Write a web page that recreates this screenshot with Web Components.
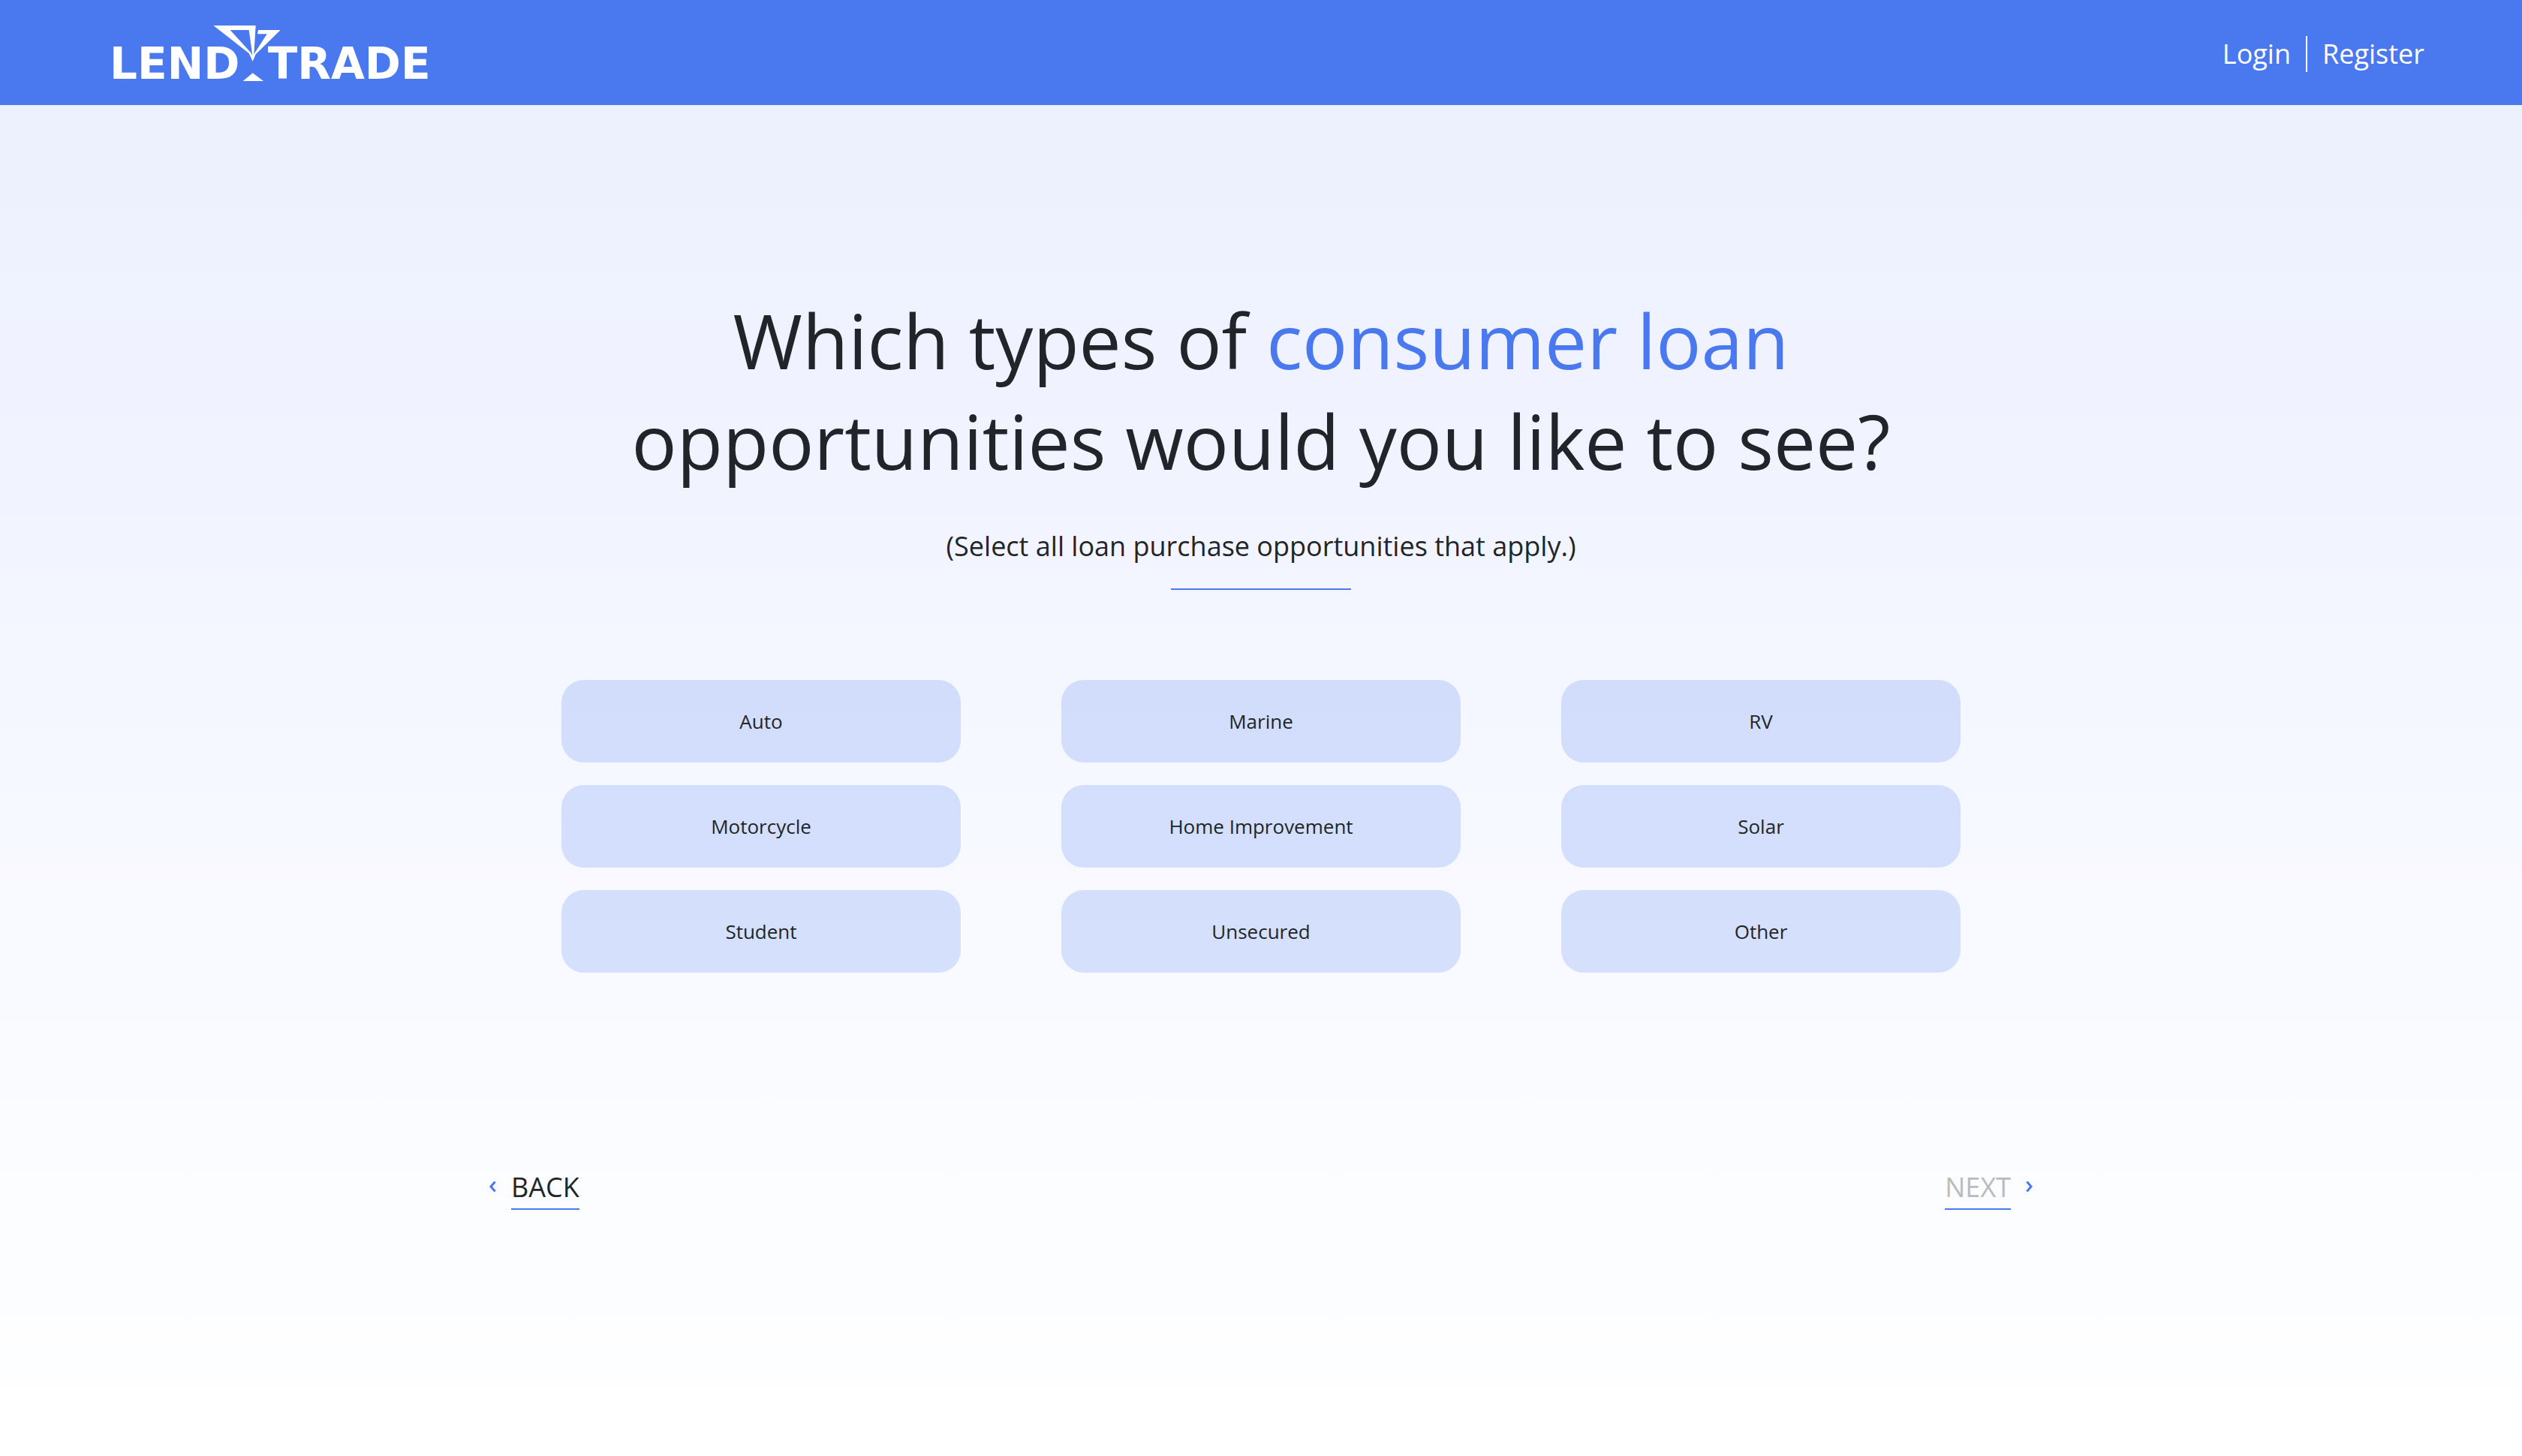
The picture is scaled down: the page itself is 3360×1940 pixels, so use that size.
<!DOCTYPE html>
<html lang="en">
<head>
<meta charset="utf-8">
<title>LendTrade</title>
<style>
  html { height: 100%; }
  body {
    margin: 0;
    min-height: 100%;
    font-family: "Open Sans", "Noto Sans", sans-serif;
    font-size: 36px;
    line-height: 48px;
    color: #212529;
    --brand: #4a78ef;
    --tile: rgba(74, 120, 239, .2);
    background: linear-gradient(180deg, #ebf0fd 0%, #f0f3ff 28%, #f5f8ff 52%, #fbfcff 80%, #fff 100%);
  }
</style>
</head>
<body>
<lt-app></lt-app>
<script>
  const define = (name, html, setup) => {
    const template = document.createElement('template');
    template.innerHTML = html;
    customElements.define(name, class extends HTMLElement {
      constructor() {
        super();
        this.attachShadow({ mode: 'open' }).append(template.content.cloneNode(true));
      }
      connectedCallback() { if (setup) setup(this, this.shadowRoot); }
    });
  };

  define('lt-logo', `
    <style>
      :host { display: block; }
      a { display: block; color: #fff; }
      svg { display: block; width: 458px; height: 80px; fill: currentColor; overflow: visible; }
      text { font: bold 174px "DejaVu Sans", sans-serif; }
    </style>
    <a href="#" aria-label="LendTrade home">
      <svg viewBox="60 60 1374 240">
        <path fill-rule="evenodd" d="M523 72H692L685 188L680 215L665 183ZM590 90L672 180L679 192L665 90Z"/>
        <path d="M702 90H791L692 187L680 215L676 200L685 187L737 106H699Z"/>
        <path d="M641 294L680 262L723 294Z"/>
        <text x="628" y="285" text-anchor="end">LEND</text>
        <text x="740" y="285">TRADE</text>
      </svg>
    </a>`);

  define('lt-header', `
    <style>
      :host {
        display: flex; justify-content: space-between; align-items: center;
        height: 140px; box-sizing: border-box; padding: 0 130px;
        background: var(--brand); color: #fff;
      }
      nav { display: flex; align-items: center; padding-top: 4px; }
      a { color: inherit; text-decoration: none; }
      a + a { margin-left: 20px; padding-left: 20px; border-left: 2px solid #fff; }
    </style>
    <lt-logo></lt-logo>
    <nav><a href="#login">Login</a><a href="#register">Register</a></nav>`);

  define('lt-title', `
    <style>
      :host { display: flex; flex-direction: column; align-items: center; text-align: center; }
      h1 { margin: 0; max-width: 1800px; font-size: 100px; line-height: 134px; font-weight: 400; text-wrap: balance; }
      p { margin: 50px 0 0; }
      hr { width: 240px; height: 2px; margin: 32px 0 0; border: 0; background: var(--brand); }
    </style>
    <h1><slot></slot></h1>
    <p><slot name="hint"></slot></p>
    <hr>`);

  define('lt-option', `
    <style>
      :host { display: block; }
      button {
        display: block; width: 100%; height: 110px; padding: 0; border: 0; border-radius: 30px;
        background: var(--tile); color: inherit; font: inherit; font-size: 26px; cursor: pointer;
      }
      button[aria-pressed="true"] { background: var(--brand); color: #fff; }
    </style>
    <button type="button" aria-pressed="false"><slot></slot></button>`,
    (host, root) => {
      const button = root.querySelector('button');
      button.onclick = () => button.setAttribute('aria-pressed', button.getAttribute('aria-pressed') !== 'true');
    });

  define('lt-options', `
    <style>
      :host {
        display: grid; grid-template-columns: repeat(3, 1fr); gap: 30px 134px;
        width: 100%; max-width: 1864px; margin: 0 auto;
      }
    </style>
    <slot></slot>`);

  define('lt-step', `
    <style>
      :host { display: block; }
      button {
        display: flex; align-items: center; gap: 20px; padding: 0; border: 0;
        background: none; color: inherit; font: inherit; cursor: pointer;
      }
      :host([forward]) button { flex-direction: row-reverse; }
      :host([forward]) svg { transform: scaleX(-1); }
      span { padding-bottom: 4px; border-bottom: 2px solid var(--brand); }
      button:disabled { color: #bbb; cursor: default; }
      svg { width: 9px; height: 14px; margin-bottom: 8px; fill: none; stroke: var(--brand); stroke-width: 3; }
    </style>
    <button type="button">
      <svg viewBox="0 0 9 14" aria-hidden="true"><path d="M7.6 .5L2 7L7.6 13.5"/></svg>
      <span><slot></slot></span>
    </button>`,
    (host, root) => { root.querySelector('button').disabled = host.hasAttribute('disabled'); });

  define('lt-app', `
    <style>
      :host { display: block; }
      main { display: flex; flex-direction: column; padding: 246px 130px 0; }
      em { font-style: normal; color: var(--brand); }
      lt-options { margin-top: 120px; }
      .steps {
        display: flex; justify-content: space-between;
        width: 100%; max-width: 2056px; margin: 262px auto 0;
      }
    </style>
    <lt-header></lt-header>
    <main>
      <lt-title>Which types of <em>consumer loan</em> opportunities would you like to see?<span slot="hint">(Select all loan purchase opportunities that apply.)</span></lt-title>
      <lt-options>
        <lt-option>Auto</lt-option><lt-option>Marine</lt-option><lt-option>RV</lt-option>
        <lt-option>Motorcycle</lt-option><lt-option>Home Improvement</lt-option><lt-option>Solar</lt-option>
        <lt-option>Student</lt-option><lt-option>Unsecured</lt-option><lt-option>Other</lt-option>
      </lt-options>
      <div class="steps">
        <lt-step>BACK</lt-step>
        <lt-step forward disabled>NEXT</lt-step>
      </div>
    </main>`);
</script>
</body>
</html>
